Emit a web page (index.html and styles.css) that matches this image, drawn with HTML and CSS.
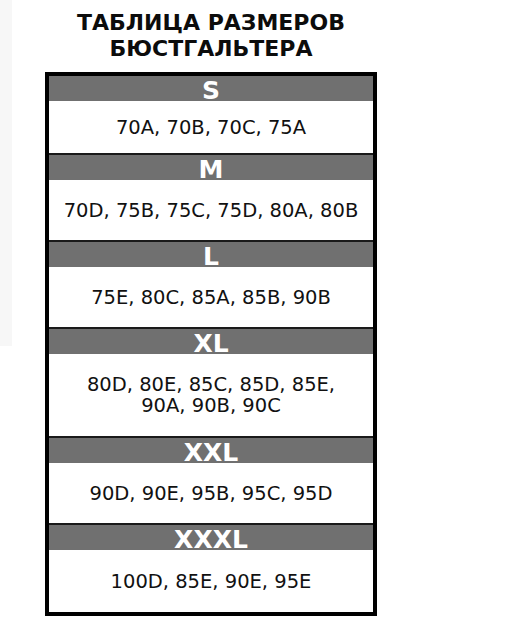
FILE: index.html
```html
<!DOCTYPE html>
<html lang="ru">
<head>
<meta charset="utf-8">
<title>Таблица размеров бюстгальтера</title>
<link rel="stylesheet" href="styles.css">
</head>
<body>
<div class="strip"></div>
<main class="chart">
  <h1 class="title">ТАБЛИЦА РАЗМЕРОВ<br>БЮСТГАЛЬТЕРА</h1>
  <div class="table">
    <section class="row">
      <div class="size">S</div>
      <div class="fits fits--s">70A, 70B, 70C, 75A</div>
    </section>
    <section class="row">
      <div class="size">M</div>
      <div class="fits">70D, 75B, 75C, 75D, 80A, 80B</div>
    </section>
    <section class="row">
      <div class="size">L</div>
      <div class="fits">75E, 80C, 85A, 85B, 90B</div>
    </section>
    <section class="row">
      <div class="size">XL</div>
      <div class="fits fits--two">80D, 80E, 85C, 85D, 85E,<br>90A, 90B, 90C</div>
    </section>
    <section class="row">
      <div class="size">XXL</div>
      <div class="fits">90D, 90E, 95B, 95C, 95D</div>
    </section>
    <section class="row">
      <div class="size">XXXL</div>
      <div class="fits fits--last">100D, 85E, 90E, 95E</div>
    </section>
  </div>
</main>
</body>
</html>
```

FILE: styles.css
```css
* { box-sizing: border-box; }

html, body {
  margin: 0;
  padding: 0;
  background: #ffffff;
}

body {
  display: flex;
  align-items: flex-start;
  font-family: "DejaVu Sans", "Liberation Sans", sans-serif;
  color: #111111;
}

.strip {
  width: 12px;
  height: 346px;
  background: #f7f7f7;
  flex: none;
}

.chart {
  margin-left: 33px;
  width: 332px;
  display: flex;
  flex-direction: column;
}

.title {
  margin: 10px 0 10px;
  font-size: 22px;
  line-height: 26px;
  font-weight: 700;
  text-align: center;
  color: #0c0c0c;
}

.table {
  border: 4px solid #000000;
  display: flex;
  flex-direction: column;
}

.row + .row {
  border-top: 2px solid #1a1a1a;
}

.size {
  height: 25px;
  padding-top: 4px;
  line-height: 22px;
  background: #707070;
  color: #ffffff;
  font-size: 25px;
  font-weight: 700;
  text-align: center;
}

.fits {
  padding: 19.5px 0;
  font-size: 19.5px;
  line-height: 21px;
  text-align: center;
  background: #ffffff;
}

.fits--s {
  padding: 15.5px 0;
}

.fits--two {
  padding: 20px 0;
}

.fits--last {
  padding: 20.5px 0;
}
```
